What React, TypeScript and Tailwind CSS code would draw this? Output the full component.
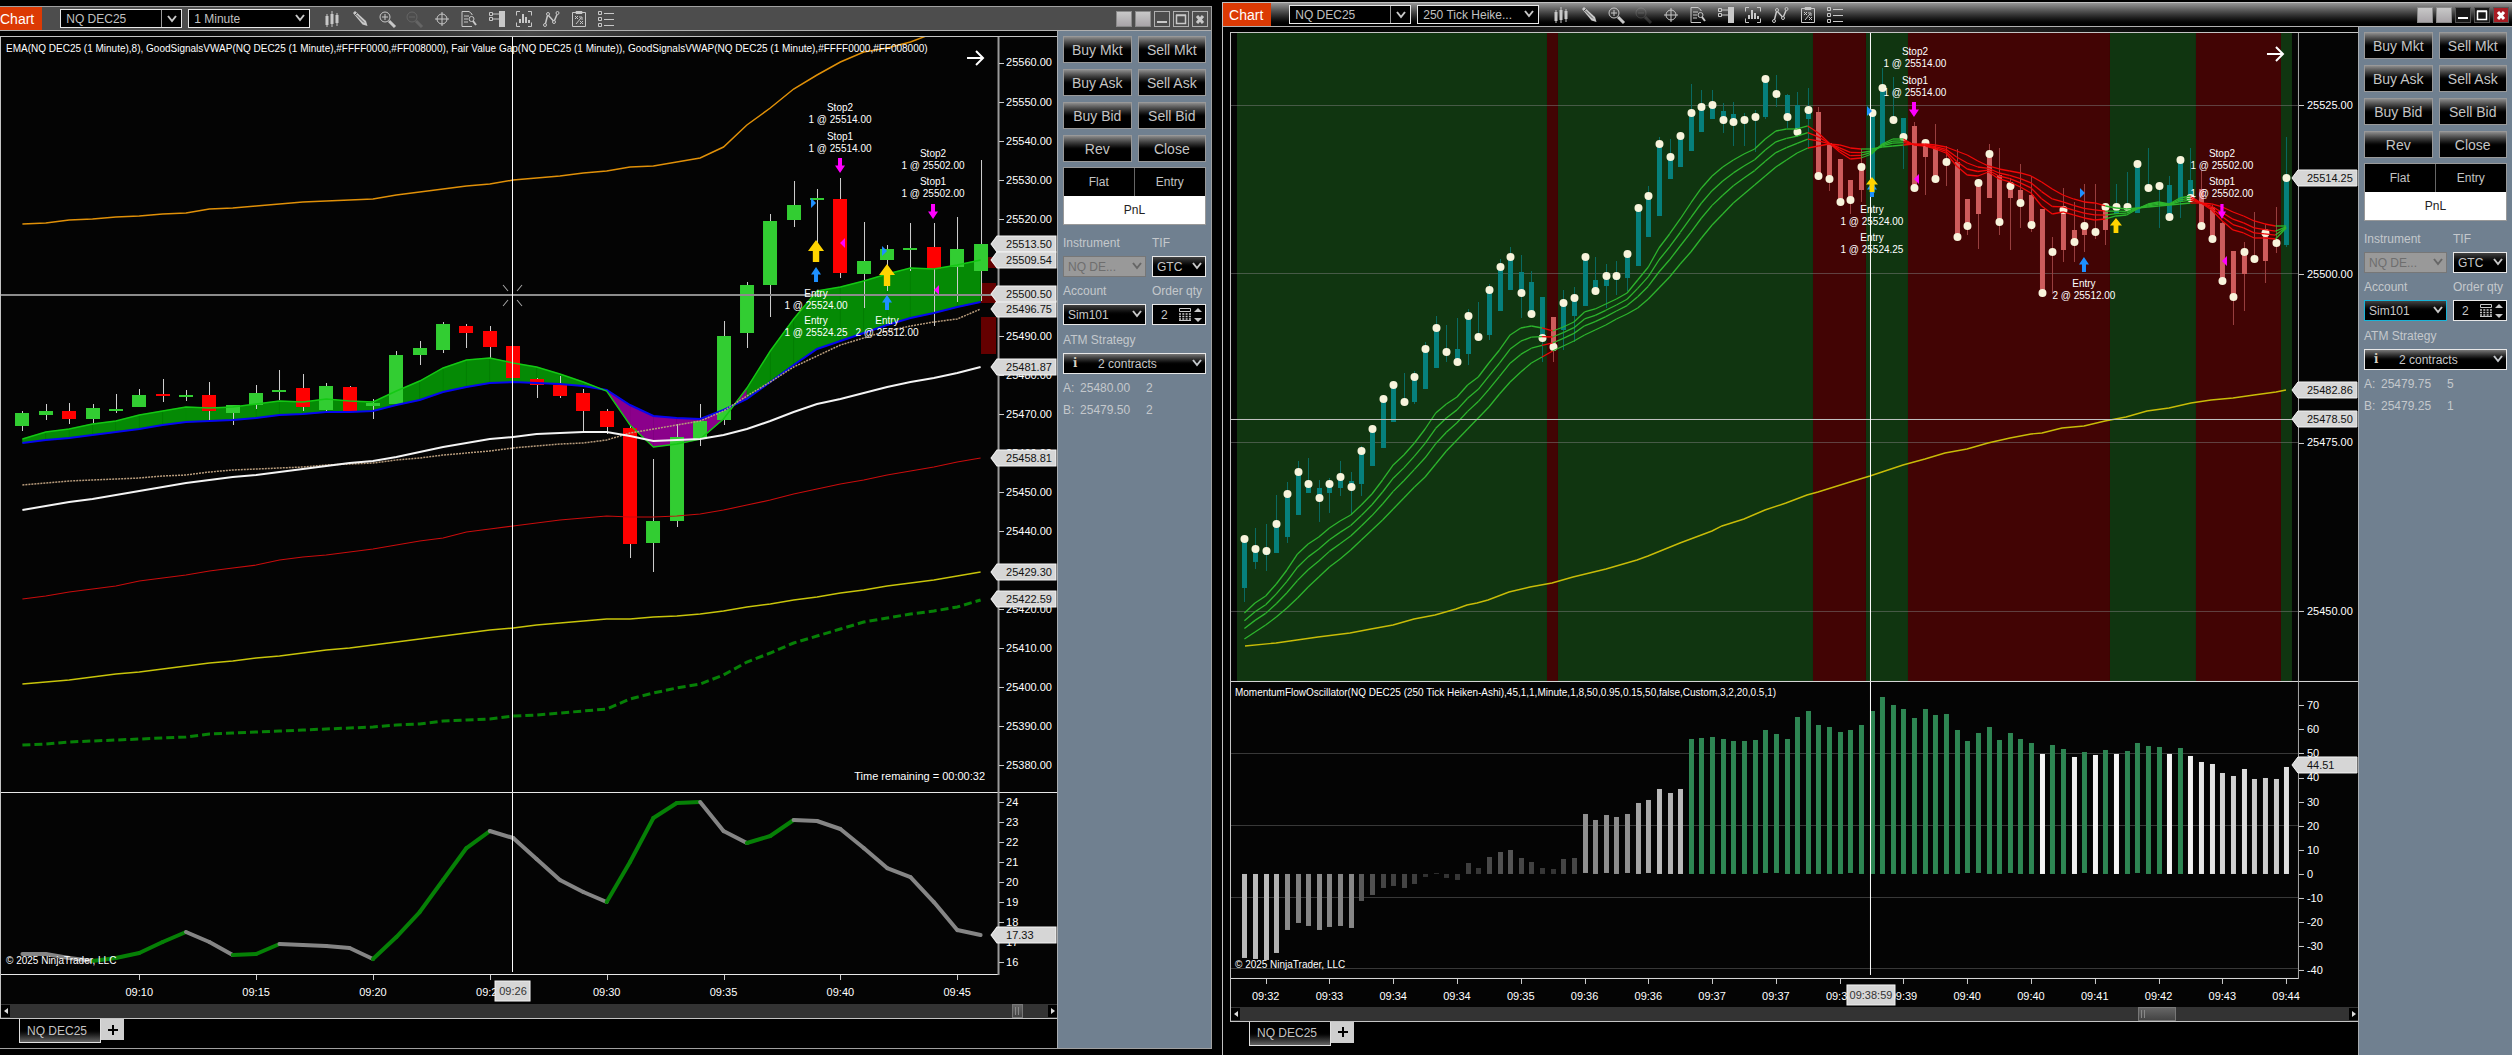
import clsx from "clsx";
import type { ReactNode } from "react";

const ink = "#c8c8c8";

type Bar = { high: number; top: number; bottom: number; low: number; up: boolean };
type HaBar = { high: number; top: number; bottom: number; low: number; dot: number };
type Point = [number, number];

/* ---------- one minute chart data ---------- */

const minuteBars: Bar[] = (
  [
    [411, 413, 426, 431, 1], [404, 411, 415, 420, 1], [403, 411, 419, 424, 0], [404, 408, 419, 423, 1],
    [394, 409, 411, 413, 1], [389, 395, 407, 407, 1], [379, 394, 396, 402, 0], [390, 395, 397, 401, 1],
    [382, 395, 411, 420, 0], [405, 405, 413, 425, 1], [385, 393, 405, 409, 1], [370, 390, 392, 400, 1],
    [374, 388, 407, 411, 0], [383, 386, 410, 412, 1], [386, 387, 411, 411, 0], [399, 403, 406, 419, 1],
    [351, 355, 404, 404, 1], [341, 348, 355, 365, 1], [322, 324, 350, 353, 1], [324, 326, 333, 348, 0],
    [326, 331, 347, 358, 0], [346, 346, 378, 378, 0], [378, 379, 385, 398, 0], [376, 385, 396, 398, 0],
    [389, 393, 411, 432, 0], [409, 411, 427, 434, 0], [425, 428, 544, 558, 0], [459, 521, 543, 572, 1],
    [424, 437, 521, 527, 1], [404, 421, 439, 446, 1], [321, 336, 420, 425, 1], [282, 285, 333, 348, 1],
    [214, 221, 285, 317, 1], [181, 205, 220, 227, 1], [189, 198, 200, 243, 1], [178, 199, 273, 278, 0],
    [222, 261, 274, 308, 1], [245, 249, 260, 291, 1], [223, 248, 250, 271, 1], [223, 247, 269, 326, 0],
    [217, 249, 267, 302, 1], [160, 244, 271, 301, 1],
  ] as number[][]
).map(([high, top, bottom, low, up]) => ({ high, top, bottom, low, up: up === 1 }));

const ema = [
  439, 432, 429, 424, 421, 415, 411, 407, 408, 407, 404, 401, 402, 399, 401, 402, 391, 381, 368, 360, 358, 363, 367,
  374, 382, 391, 425, 447, 444, 439, 419, 388, 351, 319, 291, 287, 281, 274, 268, 269, 265, 260,
];
const vwapMid = [
  443, 440, 438, 435, 432, 429, 425, 422, 421, 420, 418, 415, 414, 412, 412, 411, 405, 400, 392, 387, 383, 382, 383,
  384, 386, 390, 405, 416, 418, 419, 410, 399, 382, 365, 349, 341, 333, 325, 318, 313, 307, 302,
];
const whiteLine = [
  510, 506, 502, 499, 495, 491, 487, 483, 480, 477, 475, 472, 469, 466, 463, 461, 457, 452, 447, 443, 439, 437, 434,
  433, 432, 432, 436, 441, 440, 439, 435, 429, 421, 412, 404, 399, 393, 387, 382, 378, 373, 367,
];
const tanLine = [
  485, 483, 481, 480, 479, 478, 476, 475, 472, 470, 469, 468, 467, 465, 464, 463, 460, 458, 455, 453, 451, 448, 446,
  444, 443, 440, 433, 429, 425, 421, 411, 396, 382, 367, 356, 345, 338, 331, 326, 322, 319, 309,
];
const orangeLine = [
  224, 223, 220, 219, 217, 216, 214, 213, 209, 208, 206, 204, 202, 201, 200, 199, 195, 192, 189, 186, 184, 180, 178,
  176, 173, 171, 167, 166, 162, 158, 147, 125, 108, 89, 75, 62, 52, 48, 42, 33,
];
const redLine = [
  599, 596, 592, 589, 586, 581, 578, 575, 571, 568, 565, 560, 557, 555, 552, 549, 545, 541, 538, 532, 529, 526, 523,
  520, 518, 516, 517, 517, 516, 514, 510, 505, 500, 494, 489, 484, 480, 475, 471, 467, 462, 458,
];
const yellowLine = [
  684, 682, 680, 677, 674, 672, 669, 666, 663, 661, 658, 656, 653, 650, 648, 645, 642, 639, 636, 633, 630, 628, 625,
  623, 621, 619, 619, 617, 616, 614, 611, 607, 604, 600, 597, 593, 590, 586, 583, 580, 576, 572,
];
const greenDashed = [
  745, 744, 742, 741, 740, 739, 738, 737, 734, 733, 732, 731, 730, 729, 728, 727, 725, 724, 721, 720, 719, 716, 715,
  713, 711, 709, 699, 693, 688, 684, 675, 662, 653, 643, 636, 629, 622, 618, 614, 611, 607, 600,
];
const adx = [
  954, 954, 958, 961, 958, 953, 942, 932, 942, 955, 954, 944, 945, 946, 948, 959, 937, 912, 880, 848, 831, 838, 859,
  880, 892, 902, 862, 818, 803, 802, 831, 843, 836, 820, 821, 829, 848, 868, 877, 902, 930, 935,
];

const mx = (i: number) => 22.4 + i * 23.37;
const minutePriceY = (p: number) => 62.5 + (25560 - p) * 3.903;
const adxY = (v: number) => 802.4 + (24 - v) * 19.93;

/* ---------- 250 tick chart data ---------- */

const tickBars: HaBar[] = (
  [
    [539, 539, 588, 602, 539], [528, 549, 562, 569, 549], [524, 551, 555, 571, 551], [495, 524, 553, 553, 524],
    [482, 494, 537, 543, 494], [461, 472, 515, 515, 472], [458, 484, 493, 493, 484], [480, 488, 498, 522, 498],
    [478, 484, 493, 513, 484], [461, 477, 488, 496, 477], [472, 481, 487, 515, 487], [446, 451, 484, 496, 451],
    [429, 429, 466, 466, 429], [399, 399, 448, 448, 399], [385, 385, 422, 422, 385], [373, 402, 402, 402, 402],
    [371, 377, 402, 404, 377], [342, 349, 389, 389, 349], [316, 328, 368, 368, 328], [325, 352, 352, 362, 352],
    [318, 349, 362, 362, 362], [309, 316, 354, 365, 316], [302, 337, 337, 337, 337], [284, 290, 335, 340, 290],
    [259, 267, 311, 311, 267], [247, 257, 290, 290, 257], [255, 272, 293, 318, 293], [271, 282, 314, 314, 314],
    [297, 297, 338, 362, 338], [317, 317, 347, 362, 347], [290, 303, 330, 350, 303], [287, 298, 316, 342, 298],
    [257, 257, 306, 306, 257], [257, 280, 291, 291, 291], [264, 276, 286, 308, 276], [261, 276, 280, 295, 276],
    [252, 254, 278, 291, 254], [208, 208, 266, 266, 208], [186, 196, 237, 237, 196], [137, 144, 216, 216, 144],
    [139, 157, 179, 179, 157], [132, 136, 167, 167, 136], [84, 113, 151, 151, 113], [90, 107, 132, 132, 107],
    [90, 105, 119, 119, 105], [103, 111, 120, 133, 120], [102, 114, 122, 146, 122], [113, 120, 120, 146, 120],
    [110, 117, 117, 152, 117], [75, 79, 117, 119, 79], [75, 94, 94, 107, 94], [94, 95, 117, 128, 117],
    [92, 105, 132, 137, 132], [88, 110, 119, 149, 110], [107, 112, 176, 176, 176], [143, 143, 179, 191, 179],
    [159, 159, 202, 202, 202], [180, 180, 200, 214, 200], [149, 167, 190, 202, 167], [113, 113, 193, 193, 113],
    [68, 88, 145, 145, 88], [77, 120, 120, 120, 120], [118, 118, 137, 169, 137], [122, 126, 188, 188, 188],
    [143, 143, 157, 195, 143], [124, 148, 179, 179, 179], [146, 162, 162, 186, 162], [149, 162, 237, 237, 237],
    [199, 199, 226, 235, 226], [179, 183, 214, 249, 183], [144, 154, 198, 198, 154], [148, 175, 222, 235, 222],
    [178, 186, 198, 250, 186], [164, 190, 203, 228, 203], [176, 195, 225, 232, 225], [209, 209, 293, 293, 293],
    [237, 252, 252, 294, 252], [188, 210, 250, 262, 210], [202, 230, 242, 262, 242], [184, 226, 235, 252, 226],
    [184, 232, 232, 239, 232], [207, 207, 230, 245, 207], [184, 207, 214, 214, 207], [172, 207, 207, 207, 207],
    [161, 164, 213, 213, 164], [148, 188, 188, 188, 188], [184, 186, 186, 228, 186], [176, 185, 217, 217, 217],
    [156, 160, 202, 218, 160], [148, 180, 198, 198, 198], [170, 189, 226, 226, 226], [205, 207, 239, 242, 239],
    [222, 223, 281, 281, 281], [251, 251, 297, 325, 297], [242, 252, 274, 311, 252], [212, 259, 259, 259, 259],
    [225, 233, 261, 283, 233], [207, 243, 243, 253, 243], [137, 178, 245, 247, 178],
  ] as number[][]
).map(([high, top, bottom, low, dot]) => ({ high, top, bottom, low, dot }));

const fanFast = [
  613, 603, 596, 584, 570, 554, 544, 537, 528, 521, 515, 505, 494, 480, 465, 455, 443, 429, 413, 404, 397, 385, 377,
  363, 350, 335, 328, 326, 328, 331, 327, 322, 312, 309, 304, 299, 293, 280, 267, 248, 234, 219, 203, 188, 176, 167,
  160, 154, 149, 139, 131, 129, 129, 126, 133, 143, 152, 159, 158, 154, 144, 139, 139, 145, 146, 149, 153, 166, 175,
  176, 172, 179, 182, 187, 193, 206, 214, 212, 215, 218, 220, 219, 216, 215, 209, 204, 202, 204, 198, 196, 203, 210,
  221, 230, 233, 238, 238, 239, 228,
];
const fanSlow = [
  639, 632, 625, 617, 608, 598, 587, 577, 567, 559, 550, 540, 530, 520, 509, 498, 487, 477, 464, 451, 440, 429, 418,
  407, 394, 382, 372, 363, 357, 351, 346, 341, 335, 330, 325, 319, 314, 308, 299, 288, 277, 264, 252, 238, 225, 214,
  203, 194, 185, 176, 167, 160, 153, 148, 146, 144, 145, 148, 149, 149, 147, 146, 145, 144, 144, 145, 147, 151, 155,
  161, 166, 169, 171, 173, 176, 182, 189, 195, 199, 202, 203, 206, 208, 209, 208, 207, 206, 205, 204, 203, 203, 204,
  207, 212, 216, 221, 224, 226, 226,
];
const fan = [0, 0.3, 0.6, 1].map((t) => fanFast.map((y, i) => y + (fanSlow[i] - y) * t));

const tickYellow: Point[] = [
  [1245, 646], [1276, 643], [1297, 640], [1318, 637], [1350, 633], [1371, 629], [1393, 625], [1414, 619], [1435, 615],
  [1456, 609], [1467, 605], [1477, 603], [1488, 600], [1509, 592], [1530, 587], [1552, 583], [1573, 577], [1606, 569],
  [1637, 560], [1648, 556], [1680, 543], [1712, 531], [1722, 526], [1744, 519], [1765, 510], [1786, 503], [1807, 495],
  [1818, 492], [1850, 482], [1870, 476], [1882, 472], [1903, 465], [1925, 459], [1945, 453], [1967, 449], [1988, 443],
  [2010, 438], [2031, 434], [2042, 433], [2062, 428], [2084, 426], [2105, 421], [2126, 417], [2147, 411], [2169, 408],
  [2191, 403], [2211, 400], [2233, 398], [2254, 395], [2276, 392], [2286, 390],
];

const momentum = [
  -34.8, -35.2, -35.6, -32.9, -23.4, -20.4, -21.7, -23.4, -22.1, -21.7, -22.6, -11.1, -8.9, -6, -5.1, -6, -4.3, -1.3,
  0.4, -1.7, -2.6, 4.5, 2.6, 7, 9.1, 9.9, 6.5, 5, 2.6, 2.1, 6.1, 6.5, 24.7, 22.4, 24.3, 23.7, 24.7, 29.4, 30.5, 35.3,
  33.6, 35.3, 56.2, 56.6, 57, 55.9, 55.3, 55.3, 55.7, 59.6, 57.9, 55.9, 65.2, 67.7, 62, 61.1, 59.1, 59.6, 61.8, 67.7,
  73.5, 70.2, 68.5, 64.8, 68.5, 66, 66.4, 59.9, 55, 58.3, 61, 55.5, 58.3, 56.2, 54.5, 49.9, 53.5, 51.9, 48.5, 50.4,
  49.4, 51.5, 49.9, 51.1, 54.2, 53.2, 52.6, 49.8, 52.2, 48.9, 46.5, 45.7, 41.8, 40.7, 43.5, 39.4, 39.9, 39.4, 44.5,
];

const zones = [
  { from: 1237, to: 1547, up: true },
  { from: 1547, to: 1558, up: false },
  { from: 1558, to: 1813, up: true },
  { from: 1813, to: 1866, up: false },
  { from: 1866, to: 1908, up: true },
  { from: 1908, to: 2110, up: false },
  { from: 2110, to: 2196, up: true },
  { from: 2196, to: 2281, up: false },
  { from: 2281, to: 2292, up: true },
];

const tx = (i: number) => 1244.4 + i * 10.63;
const tickPriceY = (p: number) => 105 + (25525 - p) * 6.75;
const momentumY = (v: number) => 873.8 - v * 2.407;
const isDown = (i: number) => !zones.find((z) => tx(i) >= z.from && tx(i) < z.to)?.up;

const line = (ys: number[], x: (i: number) => number) => ys.map((y, i) => `${x(i)},${y}`).join(" ");

/* ---------- shared chart marks ---------- */

function Label({ x, y, children, anchor = "middle", fill = "#fff", small }: {
  x: number; y: number; children: ReactNode; anchor?: "start" | "middle" | "end"; fill?: string; small?: boolean;
}) {
  return (
    <text x={x} y={y + 4} textAnchor={anchor} fill={fill} className={small ? "text-[10px]" : "text-[11px]"}>
      {children}
    </text>
  );
}

function PriceTag({ x, y, width, children }: { x: number; y: number; width: number; children: string }) {
  return (
    <g>
      <path d={`M${x} ${y}l6 -8h${width - 6}v16h${6 - width}z`} fill="#d6d6d6" stroke="#f4f4f4" />
      <Label x={x + 15} y={y} anchor="start" fill="#111">{children}</Label>
    </g>
  );
}

function Execution({ x, y, name, fill }: { x: number; y: number; name: string; fill: string }) {
  return (
    <g>
      <Label x={x} y={y} small>{name}</Label>
      <Label x={x} y={y + 12} small>{fill}</Label>
    </g>
  );
}

function Arrow({ x, y, size = 15, width = 10, color, down }: {
  x: number; y: number; size?: number; width?: number; color: string; down?: boolean;
}) {
  const s = down ? -1 : 1;
  const tip = down ? y + size : y;
  const head = size / 2;
  const w = width / 2;
  const n = width / 5;
  return (
    <path
      fill={color}
      d={`M${x} ${tip}L${x + w} ${tip + s * head}H${x + n}V${tip + s * size}H${x - n}V${tip + s * head}H${x - w}z`}
    />
  );
}

function ScrollArrow({ x, y }: { x: number; y: number }) {
  return <path d={`M${x} ${y}h16M${x + 9} ${y - 7}l7 7l-7 7`} fill="none" stroke="#fff" strokeWidth="2" />;
}

const yellow = "#ffd400";
const blue = "#1e90ff";
const magenta = "#ff00ff";

/* ---------- charts ---------- */

function MinuteChart() {
  const crossoverFill = ema.slice(0, -1).map((y, i) => ({
    d: `M${mx(i)} ${y}L${mx(i + 1)} ${ema[i + 1]}V${vwapMid[i + 1]}L${mx(i)} ${vwapMid[i]}z`,
    above: i < 25 || i > 30,
  }));
  const prices = Array.from({ length: 19 }, (_, i) => 25560 - i * 10);
  return (
    <svg viewBox="1 37 1056 967" className="block h-auto w-full bg-[#040404]" role="img" aria-label="NQ DEC25 1 Minute">
      <rect x="988" y="257" width="8" height="11" fill="#640000" />
      <rect x="981" y="283" width="15" height="20" fill="#640000" />
      <rect x="981" y="317" width="15" height="37" fill="#640000" />

      {crossoverFill.map((s, i) => (
        <path key={i} d={s.d} fill={s.above ? "#058a05" : "#8b008b"} stroke={s.above ? "#058a05" : "#8b008b"} strokeWidth="0.5" />
      ))}

      {minuteBars.map((b, i) => (
        <g key={i}>
          <rect x={Math.round(mx(i))} y={b.high} width="1" height={b.low - b.high} fill="#d0d0d0" />
          <rect x={Math.round(mx(i)) - 7} y={b.top} width="14" height={b.bottom - b.top} fill={b.up ? "#32cd32" : "#ff0000"} />
        </g>
      ))}

      <g fill="none">
        <polyline points={line(orangeLine, mx)} stroke="#e09008" strokeWidth="1.5" />
        <polyline points={line(redLine, mx)} stroke="#c80c0c" strokeWidth="1.2" />
        <polyline points={line(yellowLine, mx)} stroke="#c8c40a" strokeWidth="1.4" />
        <polyline points={line(greenDashed, mx)} stroke="#068006" strokeWidth="3" strokeDasharray="8 4" />
        <polyline points={line(vwapMid, mx)} stroke="#0606f0" strokeWidth="2" />
        <polyline points={line(ema, mx)} stroke="#14c814" strokeWidth="1.4" />
        <polyline points={line(tanLine, mx)} stroke="#b89c7c" strokeWidth="1.5" strokeDasharray="2 1" />
        <polyline points={line(whiteLine, mx)} stroke="#f4f4f4" strokeWidth="2" />
        {adx.slice(0, -1).map((y, i) => (
          <line
            key={i}
            x1={mx(i)}
            y1={y}
            x2={mx(i + 1)}
            y2={adx[i + 1]}
            stroke={adx[i + 1] < y ? "#068006" : "#858585"}
            strokeWidth="4"
            strokeLinecap="round"
          />
        ))}
      </g>

      {/* crosshair */}
      <path d="M1 295h997" stroke="#8c8c8c" strokeWidth="2" />
      <path d="M512.5 37v935" stroke="#fff" />
      <path d="M503 285l5 6M522 285l-5 6M503 306l5 -6M522 306l-5 -6" stroke="#aaa" fill="none" />

      {/* trades */}
      <Execution x={840} y={107} name="Stop2" fill="1 @ 25514.00" />
      <Execution x={840} y={136} name="Stop1" fill="1 @ 25514.00" />
      <Arrow x={840} y={158} color={magenta} down />
      <Execution x={933} y={153} name="Stop2" fill="1 @ 25502.00" />
      <Execution x={933} y={181} name="Stop1" fill="1 @ 25502.00" />
      <Arrow x={933} y={204} color={magenta} down />
      <Arrow x={816} y={240} size={22} width={16} color={yellow} />
      <Arrow x={816} y={267} color={blue} />
      <Execution x={816} y={293} name="Entry" fill="1 @ 25524.00" />
      <Execution x={816} y={320} name="Entry" fill="1 @ 25524.25" />
      <Arrow x={887} y={264} size={22} width={16} color={yellow} />
      <Arrow x={887} y={295} color={blue} />
      <Execution x={887} y={320} name="Entry" fill="2 @ 25512.00" />
      <path d="M811 198l5 5l-5 5zM882 246l5 5l-5 5z" fill={blue} />
      <path d="M845 238l-5 5l5 5zM939 285l-5 5l5 5z" fill={magenta} />

      <Label x={6} y={48} anchor="start" small>
        EMA(NQ DEC25 (1 Minute),8), GoodSignalsVWAP(NQ DEC25 (1 Minute),#FFFF0000,#FF008000), Fair Value Gap(NQ DEC25 (1 Minute)), GoodSignalsVWAP(NQ DEC25 (1 Minute),#FFFF0000,#FF008000)
      </Label>
      <ScrollArrow x={967} y={58} />
      <Label x={985} y={776} anchor="end">Time remaining = 00:00:32</Label>
      <Label x={6} y={960} anchor="start" small>© 2025 NinjaTrader, LLC</Label>

      {/* axes */}
      <path d="M1 792.5h1056M1 974.5h998" stroke="#e8e8e8" />
      <path d="M998.5 37v938" stroke="#9a9a9a" strokeWidth="2" />
      {prices.map((p) => (
        <g key={p}>
          <rect x="999" y={Math.round(minutePriceY(p))} width="5" height="1" fill="#ccc" />
          <Label x={1006} y={minutePriceY(p)} anchor="start">{p.toFixed(2)}</Label>
        </g>
      ))}
      {[24, 23, 22, 21, 20, 19, 18, 17, 16].map((v) => (
        <g key={v}>
          <rect x="999" y={Math.round(adxY(v))} width="5" height="1" fill="#ccc" />
          <Label x={1006} y={adxY(v)} anchor="start">{v}</Label>
        </g>
      ))}
      <PriceTag x={991} y={244} width={65}>25513.50</PriceTag>
      <PriceTag x={991} y={260} width={65}>25509.54</PriceTag>
      <PriceTag x={991} y={309} width={65}>25496.75</PriceTag>
      <PriceTag x={991} y={294} width={65}>25500.50</PriceTag>
      <PriceTag x={991} y={367} width={65}>25481.87</PriceTag>
      <PriceTag x={991} y={458} width={65}>25458.81</PriceTag>
      <PriceTag x={991} y={572} width={65}>25429.30</PriceTag>
      <PriceTag x={991} y={599} width={65}>25422.59</PriceTag>
      <PriceTag x={991} y={935} width={65}>17.33</PriceTag>
      {["09:10", "09:15", "09:20", "09:25", "09:30", "09:35", "09:40", "09:45"].map((t, i) => (
        <g key={t}>
          <rect x={Math.round(mx(5 + i * 5))} y="975" width="1" height="5" fill="#ccc" />
          <Label x={mx(5 + i * 5)} y={992}>{t}</Label>
        </g>
      ))}
      <rect x="495" y="981" width="35" height="20" fill="#d6d6d6" stroke="#f4f4f4" />
      <Label x={513} y={991} fill="#333">09:26</Label>
    </svg>
  );
}

function TickChart() {
  const timeLabels = [
    "09:32", "09:33", "09:34", "09:34", "09:35", "09:36", "09:36", "09:37", "09:37", "09:38", "09:39", "09:40",
    "09:40", "09:41", "09:42", "09:43", "09:44",
  ];
  const barColor = (v: number) => {
    if (v >= 50) return "#2e8653";
    const level = Math.round(45 + Math.abs(v) * 4);
    return `rgb(${level},${level},${level})`;
  };
  return (
    <svg viewBox="1231 33 1127 974" className="block h-auto w-full bg-[#040404]" role="img" aria-label="NQ DEC25 250 Tick Heiken-Ashi">
      {zones.map((z) => (
        <rect key={z.from} x={z.from} y="33" width={z.to - z.from} height="648" fill={z.up ? "#103510" : "#420404"} />
      ))}
      <path d="M1231 105.5h1067M1231 273.5h1067M1231 442.5h1067M1231 611.5h1067" stroke="#808080" strokeOpacity="0.5" />
      <path d="M1231 753.5h1067M1231 825.5h1067M1231 897.5h1067M1231 968.5h1067" stroke="#3a3a3a" />

      {tickBars.map((b, i) => (
        <g key={i}>
          <rect x={Math.round(tx(i))} y={b.high} width="1" height={b.low - b.high} fill={isDown(i) ? "#9a4040" : "#0a6a62"} />
          <rect x={Math.round(tx(i)) - 2} y={b.top} width="5" height={b.bottom - b.top} fill={isDown(i) ? "#cd5c5c" : "#06807c"} />
        </g>
      ))}
      {tickBars.map((b, i) => (
        <circle key={i} cx={Math.round(tx(i)) + 0.5} cy={b.dot} r="4" fill="#f8f4dc" />
      ))}
      {fan.map((ys, n) => (
        <g key={n} strokeWidth="1.3">
          {ys.slice(0, -1).map((y, i) => (
            <line key={i} x1={tx(i)} y1={y} x2={tx(i + 1)} y2={ys[i + 1]} stroke={isDown(i + 1) ? "#f00808" : "#2db52d"} />
          ))}
        </g>
      ))}
      <polyline points={tickYellow.map((p) => p.join(",")).join(" ")} fill="none" stroke="#c8bc08" strokeWidth="1.4" />

      {momentum.map((v, i) => (
        <rect
          key={i}
          x={Math.round(tx(i)) - 2}
          y={Math.round(Math.min(momentumY(v), momentumY(0)))}
          width="5"
          height={Math.max(1, Math.round(Math.abs(v) * 2.407))}
          fill={barColor(v)}
        />
      ))}

      {/* crosshair */}
      <path d="M1231 419.5h1067" stroke="#c4c4c4" />
      <path d="M1870.5 33v942" stroke="#fff" />

      {/* trades */}
      <Execution x={1915} y={51} name="Stop2" fill="1 @ 25514.00" />
      <Execution x={1915} y={80} name="Stop1" fill="1 @ 25514.00" />
      <Arrow x={1914} y={102} color={magenta} down />
      <Execution x={2222} y={153} name="Stop2" fill="1 @ 25502.00" />
      <Execution x={2222} y={181} name="Stop1" fill="1 @ 25502.00" />
      <Arrow x={2222} y={204} width={8} color={magenta} down />
      <Arrow x={1872} y={182} color={blue} />
      <Arrow x={1872} y={177} width={12} color={yellow} />
      <Execution x={1872} y={209} name="Entry" fill="1 @ 25524.00" />
      <Execution x={1872} y={237} name="Entry" fill="1 @ 25524.25" />
      <Arrow x={2084} y={257} color={blue} />
      <Execution x={2084} y={283} name="Entry" fill="2 @ 25512.00" />
      <Arrow x={2116} y={218} width={12} color={yellow} />
      <path d="M1867 106l5 5l-5 5zM2080 188l5 5l-5 5z" fill={blue} />
      <path d="M1919 174l-5 5l5 5zM2227 256l-5 5l5 5z" fill={magenta} />

      <ScrollArrow x={2267} y={54} />
      <Label x={1235} y={692} anchor="start" small>
        MomentumFlowOscillator(NQ DEC25 (250 Tick Heiken-Ashi),45,1,1,Minute,1,8,50,0.95,0.15,50,false,Custom,3,2,20,0.5,1)
      </Label>
      <Label x={1235} y={964} anchor="start" small>© 2025 NinjaTrader, LLC</Label>

      {/* axes */}
      <path d="M1231 681.5h1127M1231 978.5h1068" stroke="#dcdcdc" />
      <path d="M2298.5 33v946" stroke="#a8a8a8" />
      {[25525, 25500, 25475, 25450].map((p) => (
        <g key={p}>
          <rect x="2299" y={Math.round(tickPriceY(p))} width="5" height="1" fill="#ccc" />
          <Label x={2307} y={tickPriceY(p)} anchor="start">{p.toFixed(2)}</Label>
        </g>
      ))}
      {[70, 60, 50, 40, 30, 20, 10, 0, -10, -20, -30, -40].map((v) => (
        <g key={v}>
          <rect x="2299" y={Math.round(momentumY(v))} width="5" height="1" fill="#ccc" />
          <Label x={2307} y={momentumY(v)} anchor="start">{v}</Label>
        </g>
      ))}
      <PriceTag x={2292} y={178} width={65}>25514.25</PriceTag>
      <PriceTag x={2292} y={390} width={65}>25482.86</PriceTag>
      <PriceTag x={2292} y={419} width={65}>25478.50</PriceTag>
      <PriceTag x={2292} y={765} width={65}>44.51</PriceTag>
      {timeLabels.map((t, i) => (
        <g key={i}>
          <rect x={Math.round(tx(2 + i * 6))} y="979" width="1" height="5" fill="#ccc" />
          <Label x={tx(2 + i * 6)} y={996}>{t}</Label>
        </g>
      ))}
      <rect x="1847" y="985" width="48" height="20" fill="#d6d6d6" stroke="#f4f4f4" />
      <Label x={1871} y={995} fill="#333">09:38:59</Label>
    </svg>
  );
}

/* ---------- toolbar ---------- */

function Chevron({ className }: { className?: string }) {
  return (
    <svg viewBox="0 0 10 8" className={clsx("pointer-events-none h-2 w-2.5", className)} fill="none">
      <path d="M1 1l4 5l4 -5" stroke="currentColor" strokeWidth="2" />
    </svg>
  );
}

const toolIcons: { name: string; dim?: boolean; art: ReactNode }[] = [
  { name: "Chart style", art: <g><path d="M3 3v13M8 0v16M13 2v13" /><path d="M3 5v9M8 3v10M13 4v8" strokeWidth="3" /></g> },
  { name: "Drawing tools", art: <g><path d="M1 2l2 -2l11 10l1.500 5l-5 -1.500z" fill={ink} stroke="none" /><path d="M2.500 4.500l3 -3M4 3.500l8 8" stroke="#555" strokeWidth="1" /></g> },
  { name: "Zoom in", art: <g><circle cx="6" cy="6" r="5" /><path d="M3 6h6M6 3v6" /><path d="M10 10l6 6" strokeWidth="3" /></g> },
  { name: "Zoom out", dim: true, art: <g><circle cx="6" cy="6" r="5" /><path d="M3 6h6" /><path d="M10 10l6 6" strokeWidth="3" /></g> },
  { name: "Cross hair", art: <g><circle cx="8" cy="8" r="5" /><path d="M8 1v14M1 8h14" /></g> },
  { name: "Data box", art: <g><path d="M11 4v-1l-3 -2.500h-7v15h10M3 5h5M3 8h4M3 11h4" /><circle cx="10.500" cy="8" r="2.500" /><path d="M12 10l3 4" strokeWidth="2" /></g> },
  { name: "Chart trader", art: <g><path d="M0.500 1.500h3v3h-3zM0.500 6.500h3v3h-3zM4 3h6M4 8h6" /><path d="M10 0h6v16h-6z" fill={ink} stroke="none" /></g> },
  { name: "Data series", art: <g><path d="M4 0.500h-3.500v4M12 0.500h3.500v4M4 15.500h-3.500v-4M12 15.500h3.500v-4" /><path d="M4 12v-4M7 12v-9M10 12v-6M13 12v-3" strokeWidth="2" /></g> },
  { name: "Indicators", art: <g><circle cx="2" cy="14" r="1.500" /><circle cx="5" cy="3" r="1.500" /><circle cx="11" cy="11" r="1.500" /><circle cx="14.500" cy="2" r="1.500" /><path d="M2.500 12.500l2 -8M5.500 4.500l5 5.500M11.500 9.500l2.500 -6" strokeWidth="1.500" /></g> },
  { name: "Strategies", art: <path d="M1.500 1.500h13v14h-13zM5 0.500h6v2h-6zM4 5l3 3M7 5l-3 3M9 10l3 3M12 10l-3 3M5 13l5 -6M8 6h3v3" /> },
  { name: "Properties", art: <path d="M0.500 0.500h3v3h-3zM0.500 6.500h3v3h-3zM0.500 12.500h3v3h-3zM6 2.500h10M6 8.500h10M6 14.500h10" /> },
];

function WindowButton({ label, active, danger, children }: {
  label: string; active: boolean; danger?: boolean; children: ReactNode;
}) {
  return (
    <button
      aria-label={label}
      className={clsx(
        "h-4 w-4 border",
        active ? "border-[#555]" : "border-[#b0b0b0]",
        active && (danger ? "bg-[#a81c24]" : "bg-[#181818]"),
      )}
    >
      <svg viewBox="1 1 14 14" className="h-full w-full" fill="none" stroke={active ? "#fff" : "#c8c8c8"}>
        {children}
      </svg>
    </button>
  );
}

function Toolbar({ id, interval, active }: { id: string; interval: string; active: boolean }) {
  return (
    <header
      className={clsx(
        "flex h-6 items-center border-b border-[#b0b0b0]",
        active ? "bg-linear-to-b from-[#969696] to-black" : "bg-[#4d4d4d]",
      )}
    >
      <h2 className={clsx("flex h-full items-center bg-[#dc3a04] pr-2 text-sm text-white", active && "pl-1.5")}>Chart</h2>
      <div className="ml-[18px] flex h-[19px] w-[122px] border border-[#e8e8e8] bg-black">
        <input
          aria-label="Instrument"
          defaultValue="NQ DEC25"
          className="w-full min-w-0 flex-1 bg-black px-[5px] text-xs text-[#c0c0c0]"
        />
        <button aria-label="Choose instrument" className="flex w-5 items-center justify-center border-l border-[#999] text-[#c8c8c8]">
          <Chevron />
        </button>
      </div>
      <div className="relative ml-1.5 h-[19px] w-[122px]">
        <select
          id={`${id}-interval`}
          aria-label="Interval"
          className="block h-full w-full appearance-none border border-[#e8e8e8] bg-black px-[5px] text-xs text-[#c0c0c0]"
        >
          <option>{interval}</option>
        </select>
        <Chevron className="absolute top-[5px] right-[5px] text-[#c8c8c8]" />
      </div>
      <div className="ml-[14px] flex w-[290px] items-center justify-between">
        {toolIcons.map((icon) => (
          <button key={icon.name} aria-label={icon.name} className="h-4 w-4">
            <svg viewBox="0 0 16 16" className={clsx("h-4 w-4 overflow-visible", icon.dim && "opacity-20")} fill="none" stroke={ink}>
              {icon.art}
            </svg>
          </button>
        ))}
      </div>
      <div className="mr-[3px] ml-auto flex gap-[3px]">
        <button aria-label="Instrument link" className="h-4 w-4 border border-[#8a8a8a] bg-linear-to-b from-[#c8c8c8] to-[#a8a4a8]" />
        <button aria-label="Interval link" className="h-4 w-4 border border-[#8a8a8a] bg-linear-to-b from-[#c8c8c8] to-[#a8a4a8]" />
        <WindowButton label="Minimize" active={active}>
          <path d="M3 11h10" strokeWidth="2" />
        </WindowButton>
        <WindowButton label="Maximize" active={active}>
          <path d="M3.500 4.500h9v8h-9zM3 4h10" strokeWidth="1.500" />
        </WindowButton>
        <WindowButton label="Close window" active={active} danger>
          <path d="M5 5l6 7M11 5l-6 7" strokeWidth="3" />
        </WindowButton>
      </div>
    </header>
  );
}

/* ---------- order entry ---------- */

const orderButtons = ["Buy Mkt", "Sell Mkt", "Buy Ask", "Sell Ask", "Buy Bid", "Sell Bid", "Rev", "Close"];

function Field({ id, label, value, disabled, focused }: {
  id: string; label: string; value: string; disabled?: boolean; focused?: boolean;
}) {
  return (
    <div className="flex min-w-0 flex-col gap-[5px]">
      <label htmlFor={id} className="text-xs leading-4 whitespace-nowrap">{label}</label>
      <div className="relative">
        <select
          id={id}
          disabled={disabled}
          className={clsx(
            "block h-[21px] w-full appearance-none border px-1 text-xs",
            disabled && "border-[#777] bg-[#999] text-[#6e6e6e] opacity-100",
            !disabled && "bg-linear-to-b from-[#444] to-black to-60% text-[#c8c8c8]",
            !disabled && (focused ? "border-[#18b4d8]" : "border-[#e8e8e8]"),
          )}
        >
          <option>{value}</option>
        </select>
        <Chevron className={clsx("absolute top-1.5 right-1", disabled ? "text-[#666]" : "text-[#c8c8c8]")} />
      </div>
    </div>
  );
}

function ChartTrader({ id, ask, askSize, bid, bidSize, focused }: {
  id: string; ask: string; askSize: number; bid: string; bidSize: number; focused?: boolean;
}) {
  return (
    <aside className="w-[154px] shrink-0 border-l border-[#a8acb0] bg-[#708090] p-[5px] text-[#c4c8cc]">
      <div className="grid grid-cols-2 gap-1.5">
        {orderButtons.map((name) => (
          <button
            key={name}
            className="h-[27px] border border-[#999] bg-linear-to-b from-[#8c8c8c] to-black to-60% text-sm leading-none text-[#c4c4c4]"
          >
            {name}
          </button>
        ))}
      </div>
      <div className="mt-[5px] grid grid-cols-2 border border-[#999] bg-black text-center text-xs leading-7 text-[#c4c4c4]">
        <div className="border-r border-[#666]">Flat</div>
        <div>Entry</div>
        <div className="col-span-2 bg-white text-[#222]">PnL</div>
      </div>
      <div className="mt-[10px] grid grid-cols-[83fr_54fr] gap-x-1.5 gap-y-1.5">
        <Field id={`${id}-instrument`} label="Instrument" value="NQ DE..." disabled />
        <Field id={`${id}-tif`} label="TIF" value="GTC" />
        <Field id={`${id}-account`} label="Account" value="Sim101" focused={focused} />
        <div className="flex min-w-0 flex-col gap-[5px]">
          <label htmlFor={`${id}-qty`} className="text-xs leading-4 whitespace-nowrap">Order qty</label>
          <div className="flex h-[21px] items-center border border-[#e8e8e8] bg-black">
            <input id={`${id}-qty`} defaultValue="2" className="min-w-0 flex-1 bg-black pl-2 text-xs text-[#c8c8c8]" />
            <button aria-label="Quantity calculator">
              <svg viewBox="0 0 12 13" className="h-[13px] w-3" fill="none" stroke={ink}>
                <path d="M0.500 0.500h11v3h-11z" />
                <path d="M0 6h12M0 8.500h12M0 11h12" strokeWidth="1.500" strokeDasharray="2 1.300" />
                <path d="M0 12.500h12" />
              </svg>
            </button>
            <button aria-label="Change quantity" className="px-[3px]">
              <svg viewBox="0 0 8 14" className="h-3.5 w-2" fill={ink}>
                <path d="M4 0l4 4h-8zM4 14l4 -4h-8z" />
              </svg>
            </button>
          </div>
        </div>
      </div>
      <div className="mt-[7px] flex flex-col gap-[5px]">
        <label htmlFor={`${id}-atm`} className="text-xs leading-4">ATM Strategy</label>
        <div className="relative">
          <select
            id={`${id}-atm`}
            className="block h-[21px] w-full appearance-none border border-[#e8e8e8] bg-linear-to-b from-[#777] to-black to-60% px-[34px] text-xs text-[#c8c8c8]"
          >
            <option>2 contracts</option>
          </select>
          <span className="pointer-events-none absolute top-0 left-2.5 font-serif text-sm leading-5 font-bold text-[#d8d0c0]">i</span>
          <Chevron className="absolute top-1.5 right-1" />
        </div>
      </div>
      <dl className="mt-[3px] grid grid-cols-[17px_66px_1fr] text-xs leading-[22px]">
        <dt>A:</dt>
        <dd>{ask}</dd>
        <dd>{askSize}</dd>
        <dt>B:</dt>
        <dd>{bid}</dd>
        <dd>{bidSize}</dd>
      </dl>
    </aside>
  );
}

/* ---------- window ---------- */

function ScrollBar({ wide }: { wide?: boolean }) {
  return (
    <div className="flex h-[14px] items-center bg-[#333]">
      <button aria-label="Scroll left" className="flex h-3 w-[9px] items-center justify-center bg-black">
        <svg viewBox="0 0 4 6" className="h-1.5 w-1" fill="#ddd"><path d="M4 0v6l-4 -3z" /></svg>
      </button>
      <div
        className={clsx(
          "ml-auto flex h-full items-center gap-0.5 border border-[#777] bg-linear-to-b from-[#666] to-[#444] px-0.5",
          wide ? "mr-[173px] w-[38px]" : "mr-[25px] w-[11px]",
        )}
      >
        <i className="h-2 w-px bg-[#888]" />
        <i className="h-2 w-px bg-[#888]" />
      </div>
      <button aria-label="Scroll right" className="flex h-3 w-[9px] items-center justify-center bg-black">
        <svg viewBox="0 0 4 6" className="h-1.5 w-1" fill="#ddd"><path d="M0 0v6l4 -3z" /></svg>
      </button>
    </div>
  );
}

function Tabs() {
  return (
    <nav className="ml-[19px] flex items-start">
      <button className="h-6 w-[82px] border border-t-0 border-[#e0e0e0] bg-linear-to-b from-black from-40% to-[#666] pr-1.5 text-xs text-[#c4c4c4]">
        NQ DEC25
      </button>
      <button aria-label="Add tab" className="flex h-[21px] w-[23px] items-center justify-center bg-[#cfcfcf] text-black">
        <svg viewBox="0 0 10 10" className="h-2.5 w-2.5" stroke="currentColor" strokeWidth="2"><path d="M5 0v10M0 5h10" /></svg>
      </button>
    </nav>
  );
}

function ChartArea({ children, inset, wideThumb }: { children: ReactNode; inset?: boolean; wideThumb?: boolean }) {
  return (
    <div className="min-w-0 flex-1 bg-black">
      <div className="h-[5px] bg-linear-to-r from-black via-[#484848] to-black" />
      <div className={clsx(inset && "pl-[7px]")}>
        <div className="border-y border-l border-[#c4c4c4]">
          {children}
          <ScrollBar wide={wideThumb} />
        </div>
        <Tabs />
      </div>
    </div>
  );
}

export default function App() {
  return (
    <main className="flex min-h-screen gap-2.5 overflow-hidden bg-black font-['Liberation_Sans',Arial,sans-serif]">
      <section className="mt-1.5 mb-1.5 flex min-w-0 flex-[1212_1_0%] flex-col border-t border-r border-b border-[#a0a0a0]">
        <Toolbar id="minute" interval="1 Minute" active={false} />
        <div className="flex flex-1">
          <ChartArea>
            <MinuteChart />
          </ChartArea>
          <ChartTrader id="minute" ask="25480.00" askSize={2} bid="25479.50" bidSize={2} />
        </div>
      </section>
      <section className="mt-0.5 flex min-w-0 flex-[1290_1_0%] flex-col border-t border-l border-[#c0c0c0]">
        <Toolbar id="tick" interval="250 Tick Heike..." active />
        <div className="flex flex-1">
          <ChartArea inset wideThumb>
            <TickChart />
          </ChartArea>
          <ChartTrader id="tick" ask="25479.75" askSize={5} bid="25479.25" bidSize={1} focused />
        </div>
      </section>
    </main>
  );
}
